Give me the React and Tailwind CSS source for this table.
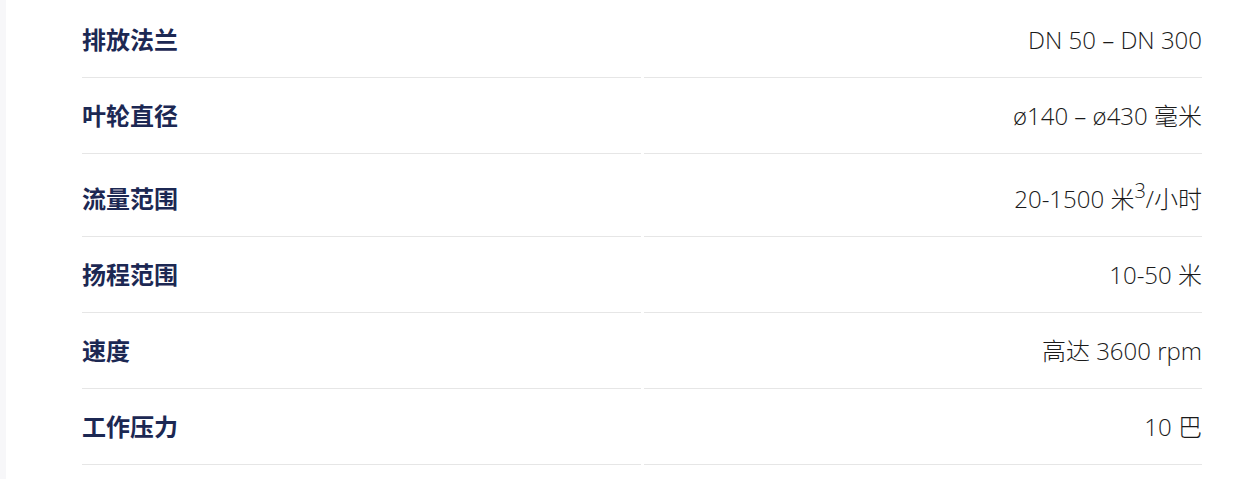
import React from 'react';

const specs = [
  { label: '排放法兰', value: 'DN 50 – DN 300' },
  { label: '叶轮直径', value: 'ø140 – ø430 毫米' },
  { label: '流量范围', value: <>20-1500 米<sup className="text-[20px]">3</sup>/小时</>, tall: true },
  { label: '扬程范围', value: '10-50 米' },
  { label: '速度', value: '高达 3600 rpm' },
  { label: '工作压力', value: '10 巴' },
];

const App = () => {
  return (
    <div className="flex min-h-[479px] bg-white">
      <div className="w-[6px] shrink-0 bg-[#f7f7f9]" />
      <div className="pl-[76px] pt-[2px]">
        <table className="w-[1126px] -mx-[3px] border-separate border-spacing-x-[3px] border-spacing-y-0">
          <tbody>
            {specs.map((s, i) => (
              <tr key={i} className="h-[76px]">
                <td className={`w-1/2 border-b border-[#e6e6e6] ${s.tall ? 'pt-[26px]' : 'pt-[19px]'} pb-[19px] align-baseline text-left text-[24px] leading-[36px] font-bold text-[#1c2853] [font-family:'Noto_Sans_CJK_SC',sans-serif]`}>
                  {s.label}
                </td>
                <td className={`w-1/2 border-b border-[#e6e6e6] ${s.tall ? 'pt-[26px]' : 'pt-[19px]'} pb-[19px] align-baseline text-right text-[24px] leading-[36px] font-light text-[#1a1a1a] [font-family:'Open_Sans','Noto_Sans_CJK_SC',sans-serif]`}>
                  {s.value}
                </td>
              </tr>
            ))}
          </tbody>
        </table>
      </div>
    </div>
  );
};

export default App;
